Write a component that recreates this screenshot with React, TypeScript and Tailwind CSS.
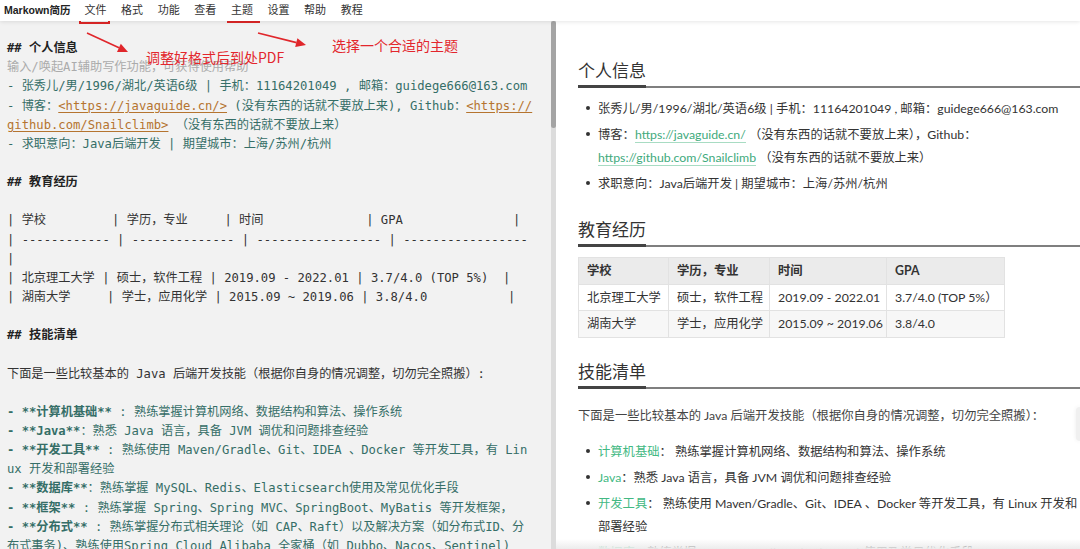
type Seg = [string, string];

const H = "font-bold text-[#222]";
const P = "text-[#ababab]";
const T = "text-[#356e67]";
const TB = "font-bold text-[#356e67]";
const L = "text-[#b5742f] underline underline-offset-2";
const K = "text-[#333]";

const editorLines: Seg[][] = [
  [[H, "## 个人信息"]],
  [[P, "输入/唤起AI辅助写作功能，可获得使用帮助"]],
  [[T, "- 张秀儿/男/1996/湖北/英语6级 | 手机：11164201049 , 邮箱：guidege666@163.com"]],
  [[T, "- 博客："], [L, "<https://javaguide.cn/>"], [T, " (没有东西的话就不要放上来), Github："], [L, "<https://"]],
  [[L, "github.com/Snailclimb>"], [T, " （没有东西的话就不要放上来）"]],
  [[T, "- 求职意向：Java后端开发 | 期望城市：上海/苏州/杭州"]],
  [],
  [[H, "## 教育经历"]],
  [],
  [[K, "| 学校         | 学历，专业     | 时间              | GPA               |"]],
  [[K, "| ------------ | -------------- | ----------------- | -----------------"]],
  [[K, "|"]],
  [[K, "| 北京理工大学 | 硕士，软件工程 | 2019.09 - 2022.01 | 3.7/4.0 (TOP 5%)  |"]],
  [[K, "| 湖南大学     | 学士，应用化学 | 2015.09 ~ 2019.06 | 3.8/4.0           |"]],
  [],
  [[H, "## 技能清单"]],
  [],
  [[K, "下面是一些比较基本的 Java 后端开发技能（根据你自身的情况调整，切勿完全照搬）:"]],
  [],
  [[TB, "- **计算机基础**"], [T, " : 熟练掌握计算机网络、数据结构和算法、操作系统"]],
  [[TB, "- **Java**"], [T, "：熟悉 Java 语言，具备 JVM 调优和问题排查经验"]],
  [[TB, "- **开发工具**"], [T, " : 熟练使用 Maven/Gradle、Git、IDEA 、Docker 等开发工具，有 Lin"]],
  [[T, "ux 开发和部署经验"]],
  [[TB, "- **数据库**"], [T, "：熟练掌握 MySQL、Redis、Elasticsearch使用及常见优化手段"]],
  [[TB, "- **框架**"], [T, " : 熟练掌握 Spring、Spring MVC、SpringBoot、MyBatis 等开发框架，"]],
  [[TB, "- **分布式**"], [T, " : 熟练掌握分布式相关理论（如 CAP、Raft）以及解决方案（如分布式ID、分"]],
  [[T, "布式事务)、熟练使用Spring Cloud Alibaba 全家桶（如 Dubbo、Nacos、Sentinel)"]],
];

const menus = ["文件", "格式", "功能", "查看", "主题", "设置", "帮助", "教程"];

function Heading({ children }: { children: string }) {
  return (
    <h2 className="flex border-b-2 border-[#7f7f7f] text-[17px] leading-[24px] text-[#333]">
      <span className="-mb-[2px] border-b-[3px] border-[#444] pb-[2px]">{children}</span>
    </h2>
  );
}

function Item({ children }: { children: React.ReactNode }) {
  return (
    <li className="flex">
      <span className="flex h-[23px] w-[20px] shrink-0 items-center">
        <span className="ml-[8px] size-[4px] rounded-full bg-[#333]" />
      </span>
      <span className="whitespace-nowrap">{children}</span>
    </li>
  );
}

function Link({ children }: { children: string }) {
  return <span className="border-b border-[#a8dcc3] text-[#3eaa7c]">{children}</span>;
}

function Key({ children }: { children: string }) {
  return <span className="text-[#42b983]">{children}</span>;
}

const cell = "whitespace-nowrap border border-[#e2e2e2] px-[8px]";

export default function App() {
  return (
    <div className="relative flex h-[549px] w-[1080px] flex-col overflow-hidden bg-white">
      {/* menu bar */}
      <div className="relative z-10 flex h-[21px] shrink-0 items-center bg-white pl-[4px] font-['Liberation_Sans','Noto_Sans_CJK_SC',sans-serif] shadow-[0_1px_4px_rgba(0,0,0,0.1)]">
        <span className="text-[10.5px] font-bold text-[#222]">Markown简历</span>
        <nav className="ml-[14px] flex gap-[14.6px] text-[11px] text-[#333]">
          {menus.map((m) => (
            <span key={m}>{m}</span>
          ))}
        </nav>
      </div>

      <div className="flex min-h-0 flex-1">
        {/* editor */}
        <div className="w-[551px] shrink-0 overflow-hidden bg-[#f2f2f2] pl-[7px] pt-[18.2px] font-['DejaVu_Sans_Mono','Noto_Sans_CJK_SC',monospace] text-[12.2px]">
          {editorLines.map((line, i) => (
            <div key={i} className="h-[19.15px] whitespace-pre leading-[19.15px]">
              {line.map(([c, t], j) => (
                <span key={j} className={c}>
                  {t}
                </span>
              ))}
            </div>
          ))}
        </div>

        {/* scrollbar */}
        <div className="w-[5px] shrink-0 bg-[#dcdcdc]">
          <div className="h-[107px] rounded-full bg-[#a4a4a4]" />
        </div>

        {/* preview */}
        <div className="relative min-w-0 flex-1 overflow-hidden bg-white pl-[22px] pt-[38px] font-['Lato','Noto_Sans_CJK_SC',sans-serif] text-[12.3px] leading-[23px] text-[#333]">
          <Heading>个人信息</Heading>
          <ul className="mt-[8.5px] flex flex-col gap-[3px]">
            <Item>张秀儿/男/1996/湖北/英语6级 | 手机：11164201049 , 邮箱：guidege666@163.com</Item>
            <Item>
              博客：<Link>https://javaguide.cn/</Link> （没有东西的话就不要放上来），Github：
              <br />
              <Link>https://github.com/Snailclimb</Link> （没有东西的话就不要放上来）
            </Item>
            <Item>求职意向：Java后端开发 | 期望城市：上海/苏州/杭州</Item>
          </ul>

          <div className="mt-[23.5px]">
            <Heading>教育经历</Heading>
          </div>
          <table className="mt-[10px] w-[426px] table-fixed border-collapse text-left">
            <thead>
              <tr className="h-[26.5px] bg-[#ebebeb]">
                <th className={`w-[90px] font-bold ${cell}`}>学校</th>
                <th className={`w-[101px] font-bold ${cell}`}>学历，专业</th>
                <th className={`w-[117px] font-bold ${cell}`}>时间</th>
                <th className={`w-[118px] font-bold ${cell}`}>GPA</th>
              </tr>
            </thead>
            <tbody>
              <tr className="h-[26.5px] bg-white">
                <td className={cell}>北京理工大学</td>
                <td className={cell}>硕士，软件工程</td>
                <td className={cell}>2019.09 - 2022.01</td>
                <td className={cell}>3.7/4.0 (TOP 5%）</td>
              </tr>
              <tr className="h-[26.5px] bg-[#f7f7f7]">
                <td className={cell}>湖南大学</td>
                <td className={cell}>学士，应用化学</td>
                <td className={cell}>2015.09 ~ 2019.06</td>
                <td className={cell}>3.8/4.0</td>
              </tr>
            </tbody>
          </table>

          <div className="mt-[22.75px]">
            <Heading>技能清单</Heading>
          </div>
          <p className="mt-[14.5px] whitespace-nowrap text-[#444]">
            下面是一些比较基本的 Java 后端开发技能（根据你自身的情况调整，切勿完全照搬）：
          </p>
          <ul className="mt-[13px] flex flex-col gap-[3px]">
            <Item>
              <Key>计算机基础</Key>： 熟练掌握计算机网络、数据结构和算法、操作系统
            </Item>
            <Item>
              <Key>Java</Key>：熟悉 Java 语言，具备 JVM 调优和问题排查经验
            </Item>
            <Item>
              <Key>开发工具</Key>： 熟练使用 Maven/Gradle、Git、IDEA 、Docker 等开发工具，有 Linux 开发和
              <br />
              部署经验
            </Item>
            <Item>
              <Key>数据库</Key>：熟练掌握 MySQL、Redis、Elasticsearch使用及常见优化手段
            </Item>
          </ul>

          <div className="absolute right-0 top-[386px] h-[34px] w-[4px] rounded-l bg-[#f0f0f0] shadow-[0_0_4px_rgba(0,0,0,0.08)]" />
          <div className="absolute inset-x-0 bottom-0 h-[10px] bg-linear-to-b from-white/0 to-[#ececec]" />
        </div>
      </div>

      {/* annotations */}
      <div className="absolute left-[78.5px] top-[2.75px] h-[21.4px] w-[31px] border-2 border-[#dc2626]" />
      <div className="absolute left-[226.6px] top-[3.4px] h-[20px] w-[33.7px] border-2 border-[#dc2626]" />
      <svg className="pointer-events-none absolute left-0 top-0" width="480" height="70" viewBox="0 0 480 70">
        <line x1="87" y1="33" x2="119" y2="47.8" stroke="#e0262b" strokeWidth="1.6" />
        <polygon points="128,52 117,51.9 120.8,43.7" fill="#e0262b" />
        <line x1="258" y1="33" x2="296.5" y2="42.6" stroke="#e0262b" strokeWidth="1.6" />
        <polygon points="306,45 295.2,47 297.4,38.2" fill="#e0262b" />
      </svg>
      <span className="absolute left-[146px] top-[49px] font-['Noto_Sans_CJK_SC',sans-serif] text-[14px] leading-[16px] text-[#e3262d]">
        调整好格式后到处PDF
      </span>
      <span className="absolute left-[332px] top-[37px] font-['Noto_Sans_CJK_SC',sans-serif] text-[14px] leading-[16px] text-[#e3262d]">
        选择一个合适的主题
      </span>
    </div>
  );
}
